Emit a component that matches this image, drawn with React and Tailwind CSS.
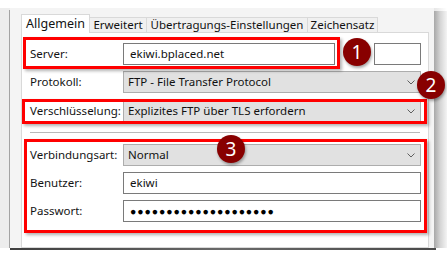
import React from 'react';

const font = { fontFamily: '"Noto Sans", "Open Sans", sans-serif' };

function Chevron() {
  return (
    <svg width="8" height="5" viewBox="0 0 8 5" className="shrink-0">
      <polyline points="0.5,0.5 4,4 7.5,0.5" fill="none" stroke="#5f5f5f" strokeWidth="1" />
    </svg>
  );
}

function Select({ value }) {
  return (
    <div className="flex-1 h-[22px] flex items-center justify-between bg-[#e1e1e1] border border-[#adadad] pl-[4px] pr-[5px] text-[11.5px] text-[#111]">
      <span>{value}</span>
      <Chevron />
    </div>
  );
}

function Input({ value, className = 'flex-1', dots = false }) {
  return (
    <div className={`${className} h-[22px] flex items-center bg-white border border-[#7a7a7a] pl-[6px] text-[11.5px] text-[#111]`}>
      {dots ? <span className="text-[10.5px] tracking-[0.9px] leading-none text-black">{value}</span> : value}
    </div>
  );
}

function Row({ label, children, className = '' }) {
  return (
    <div className={`flex items-center h-[22px] ${className}`}>
      <div className="w-[93px] shrink-0 text-[11.5px] text-[#141414]">{label}</div>
      {children}
    </div>
  );
}

function Badge({ n, className }) {
  return (
    <div className={`absolute z-20 w-[28px] h-[28px] rounded-full bg-[#880000] shadow-[1px_2px_3px_rgba(0,0,0,0.35)] flex items-center justify-center text-white text-[19px] leading-none ${className}`}>
      {n}
    </div>
  );
}

export default function App() {
  const tabs = [
    { name: 'Erweitert', w: 'w-[57px]' },
    { name: 'Übertragungs-Einstellungen', w: 'w-[161px]' },
    { name: 'Zeichensatz', w: 'w-[70px]' },
  ];

  return (
    <div className="w-[447px] h-[261px] bg-white overflow-hidden flex flex-col" style={font}>
      <div className="h-[8px] shrink-0" />
      <div className="h-[240px] shrink-0 flex">
        <div className="w-[9px] bg-[#ededed]" />
        <div className="w-px flex flex-col bg-[#ededed]">
          <div className="h-[2px]" />
          <div className="flex-1 bg-[#a3a3a3]" />
        </div>
        <div className="w-[424px] bg-[#f4f4f4] pl-[11px] pt-[6px] flex flex-col relative z-10">
          {/* tabs */}
          <div className="flex items-end h-[19px] -mb-px relative z-10">
            <div className="w-[69px] h-[19px] bg-white border border-b-0 border-[#d9d9d9] flex items-center justify-center text-[12.5px] text-[#111]">
              Allgemein
            </div>
            {tabs.map((t) => (
              <div
                key={t.name}
                className={`${t.w} h-[16px] bg-[#f0f0f0] border border-l-0 border-[#d9d9d9] flex items-center justify-center text-[11.5px] text-[#111]`}
              >
                {t.name}
              </div>
            ))}
          </div>
          {/* panel */}
          <div className="w-[408px] flex-1 bg-white border border-[#d9d9d9] relative pt-[10px] pl-[8px] pr-[7px]">
            <Row label="Server:">
              <Input value="ekiwi.bplaced.net" className="w-[212px]" />
              <div className="flex-1" />
              <Input value="" className="w-[47px]" />
            </Row>
            <Row label="Protokoll:" className="mt-[6px]">
              <Select value="FTP - File Transfer Protocol" />
            </Row>
            <Row label="Verschlüsselung:" className="mt-[7px]">
              <Select value="Explizites FTP über TLS erfordern" />
            </Row>
            <div className="h-px bg-[#b9b9b9] mt-[10px] mr-[1px]" />
            <Row label="Verbindungsart:" className="mt-[11px]">
              <Select value="Normal" />
            </Row>
            <Row label="Benutzer:" className="mt-[6px]">
              <Input value="ekiwi" />
            </Row>
            <Row label="Passwort:" className="mt-[6px]">
              <Input value={'●'.repeat(20)} dots />
            </Row>

            {/* annotations */}
            <div className="absolute left-[1px] top-[4px] w-[317px] h-[32px] border-[3px] border-[#ff0000] shadow-[2px_2px_3px_rgba(0,0,0,0.3)]" />
            <div className="absolute left-0 top-[66px] w-[405px] h-[25px] border-[3px] border-[#ff0000] shadow-[2px_2px_3px_rgba(0,0,0,0.3)]" />
            <div className="absolute left-[2px] top-[106px] w-[403px] h-[94px] border-[3px] border-[#ff0000] shadow-[2px_2px_3px_rgba(0,0,0,0.3)]" />
            <Badge n="1" className="left-[321px] top-[5px]" />
            <Badge n="2" className="left-[395px] top-[38px]" />
            <Badge n="3" className="left-[195px] top-[102px]" />
          </div>
        </div>
        <div className="flex-1 flex flex-col">
          <div className="h-[3px] bg-gradient-to-r from-[#e6e6e6] to-white" />
          <div className="flex-1 bg-gradient-to-r from-[#a8a8a8] via-[#d6d6d6] to-[#f4f4f4]" />
        </div>
      </div>
      <div className="h-[2px] shrink-0 ml-[10px] w-[426px] bg-gradient-to-r from-[#3f3f3f] via-[#6a6a6a] to-[#4a4a4a]" />
    </div>
  );
}
